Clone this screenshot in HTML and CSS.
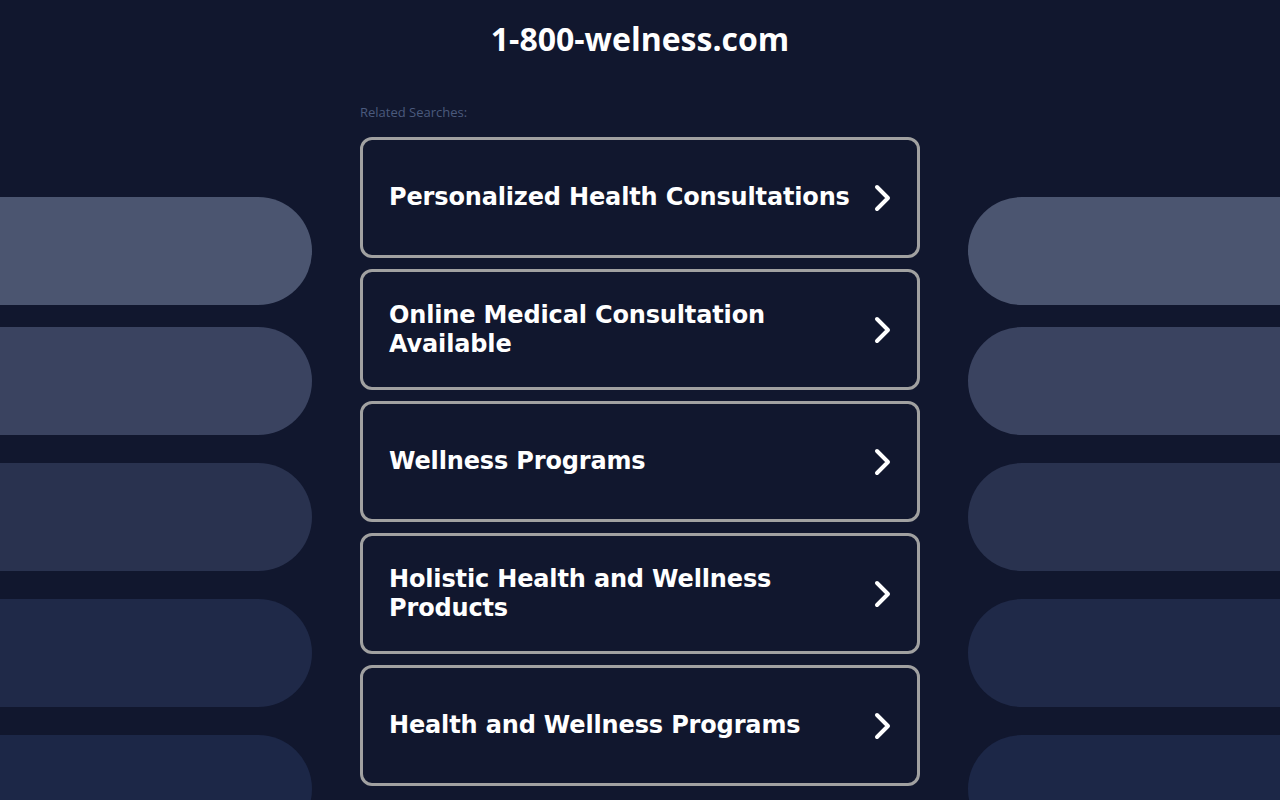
FILE: index.html
```html
<!DOCTYPE html>
<html lang="en">
<head>
    <meta charset="UTF-8">
    <meta name="viewport" content="width=device-width, initial-scale=1.0">
    <title>1-800-welness.com</title>
    <link rel="stylesheet" href="styles.css">
</head>
<body>
    <header class="header">
        <h1 class="domain">1-800-welness.com</h1>
    </header>
    <main class="layout">
        <div class="pills pills-left">
            <div class="pill tone-1"></div>
            <div class="pill tone-2"></div>
            <div class="pill tone-3"></div>
            <div class="pill tone-4"></div>
            <div class="pill tone-5"></div>
        </div>

        <div class="searches">
            <p class="label">Related Searches:</p>
            <a class="link" href="#">
                <span>Personalized Health Consultations</span>
                <svg class="chevron" viewBox="0 0 20 30"><path d="M4 4 L15 15 L4 26"/></svg>
            </a>
            <a class="link" href="#">
                <span>Online Medical Consultation Available</span>
                <svg class="chevron" viewBox="0 0 20 30"><path d="M4 4 L15 15 L4 26"/></svg>
            </a>
            <a class="link" href="#">
                <span>Wellness Programs</span>
                <svg class="chevron" viewBox="0 0 20 30"><path d="M4 4 L15 15 L4 26"/></svg>
            </a>
            <a class="link" href="#">
                <span>Holistic Health and Wellness Products</span>
                <svg class="chevron" viewBox="0 0 20 30"><path d="M4 4 L15 15 L4 26"/></svg>
            </a>
            <a class="link" href="#">
                <span>Health and Wellness Programs</span>
                <svg class="chevron" viewBox="0 0 20 30"><path d="M4 4 L15 15 L4 26"/></svg>
            </a>
        </div>

        <div class="pills pills-right">
            <div class="pill tone-1"></div>
            <div class="pill tone-2"></div>
            <div class="pill tone-3"></div>
            <div class="pill tone-4"></div>
            <div class="pill tone-5"></div>
        </div>
    </main>
</body>
</html>
```

FILE: styles.css
```css
html, body {
    height: 100%;
}
body {
    margin: 0;
    background-color: #11172e;
    overflow: hidden;
    font-family: "DejaVu Sans", Verdana, sans-serif;
}

.header {
    height: 100px;
    display: flex;
    justify-content: center;
}
.domain {
    margin: 21px 0 0;
    color: #fff;
    font-family: "Open Sans", sans-serif;
    font-weight: 700;
    font-size: 32px;
    line-height: 36px;
}

.layout {
    display: grid;
    grid-template-columns: 312px 560px 312px;
    column-gap: 48px;
}

.pills {
    display: flex;
    flex-direction: column;
    padding-top: 97px;
}
.pill {
    height: 108px;
    margin-bottom: 28px;
}
.pill:first-child {
    margin-bottom: 22px;
}
.pills-left .pill {
    border-radius: 0 54px 54px 0;
}
.pills-right .pill {
    border-radius: 54px 0 0 54px;
    margin-right: -40px;
}
.tone-1 { background-color: #4b5570; }
.tone-2 { background-color: #3a4360; }
.tone-3 { background-color: #29324f; }
.tone-4 { background-color: #1f2948; }
.tone-5 { background-color: #1c2747; }

.searches {
    display: flex;
    flex-direction: column;
    gap: 11px;
}
.label {
    margin: 3px 0 5px;
    font-family: "Open Sans", sans-serif;
    font-size: 13px;
    color: #4b5a7d;
}

.link {
    height: 115px;
    box-sizing: content-box;
    border: 3px solid #a1a1a1;
    border-radius: 12px;
    padding: 0 24px 0 26px;
    display: flex;
    align-items: center;
    justify-content: space-between;
    gap: 4px;
    color: #fff;
    text-decoration: none;
    font-weight: 700;
    font-size: 24px;
    line-height: 29px;
    letter-spacing: -0.15px;
}
.chevron {
    width: 20px;
    height: 30px;
    flex-shrink: 0;
    fill: none;
    stroke: #fff;
    stroke-width: 4;
    stroke-linecap: round;
    stroke-linejoin: round;
}
```
